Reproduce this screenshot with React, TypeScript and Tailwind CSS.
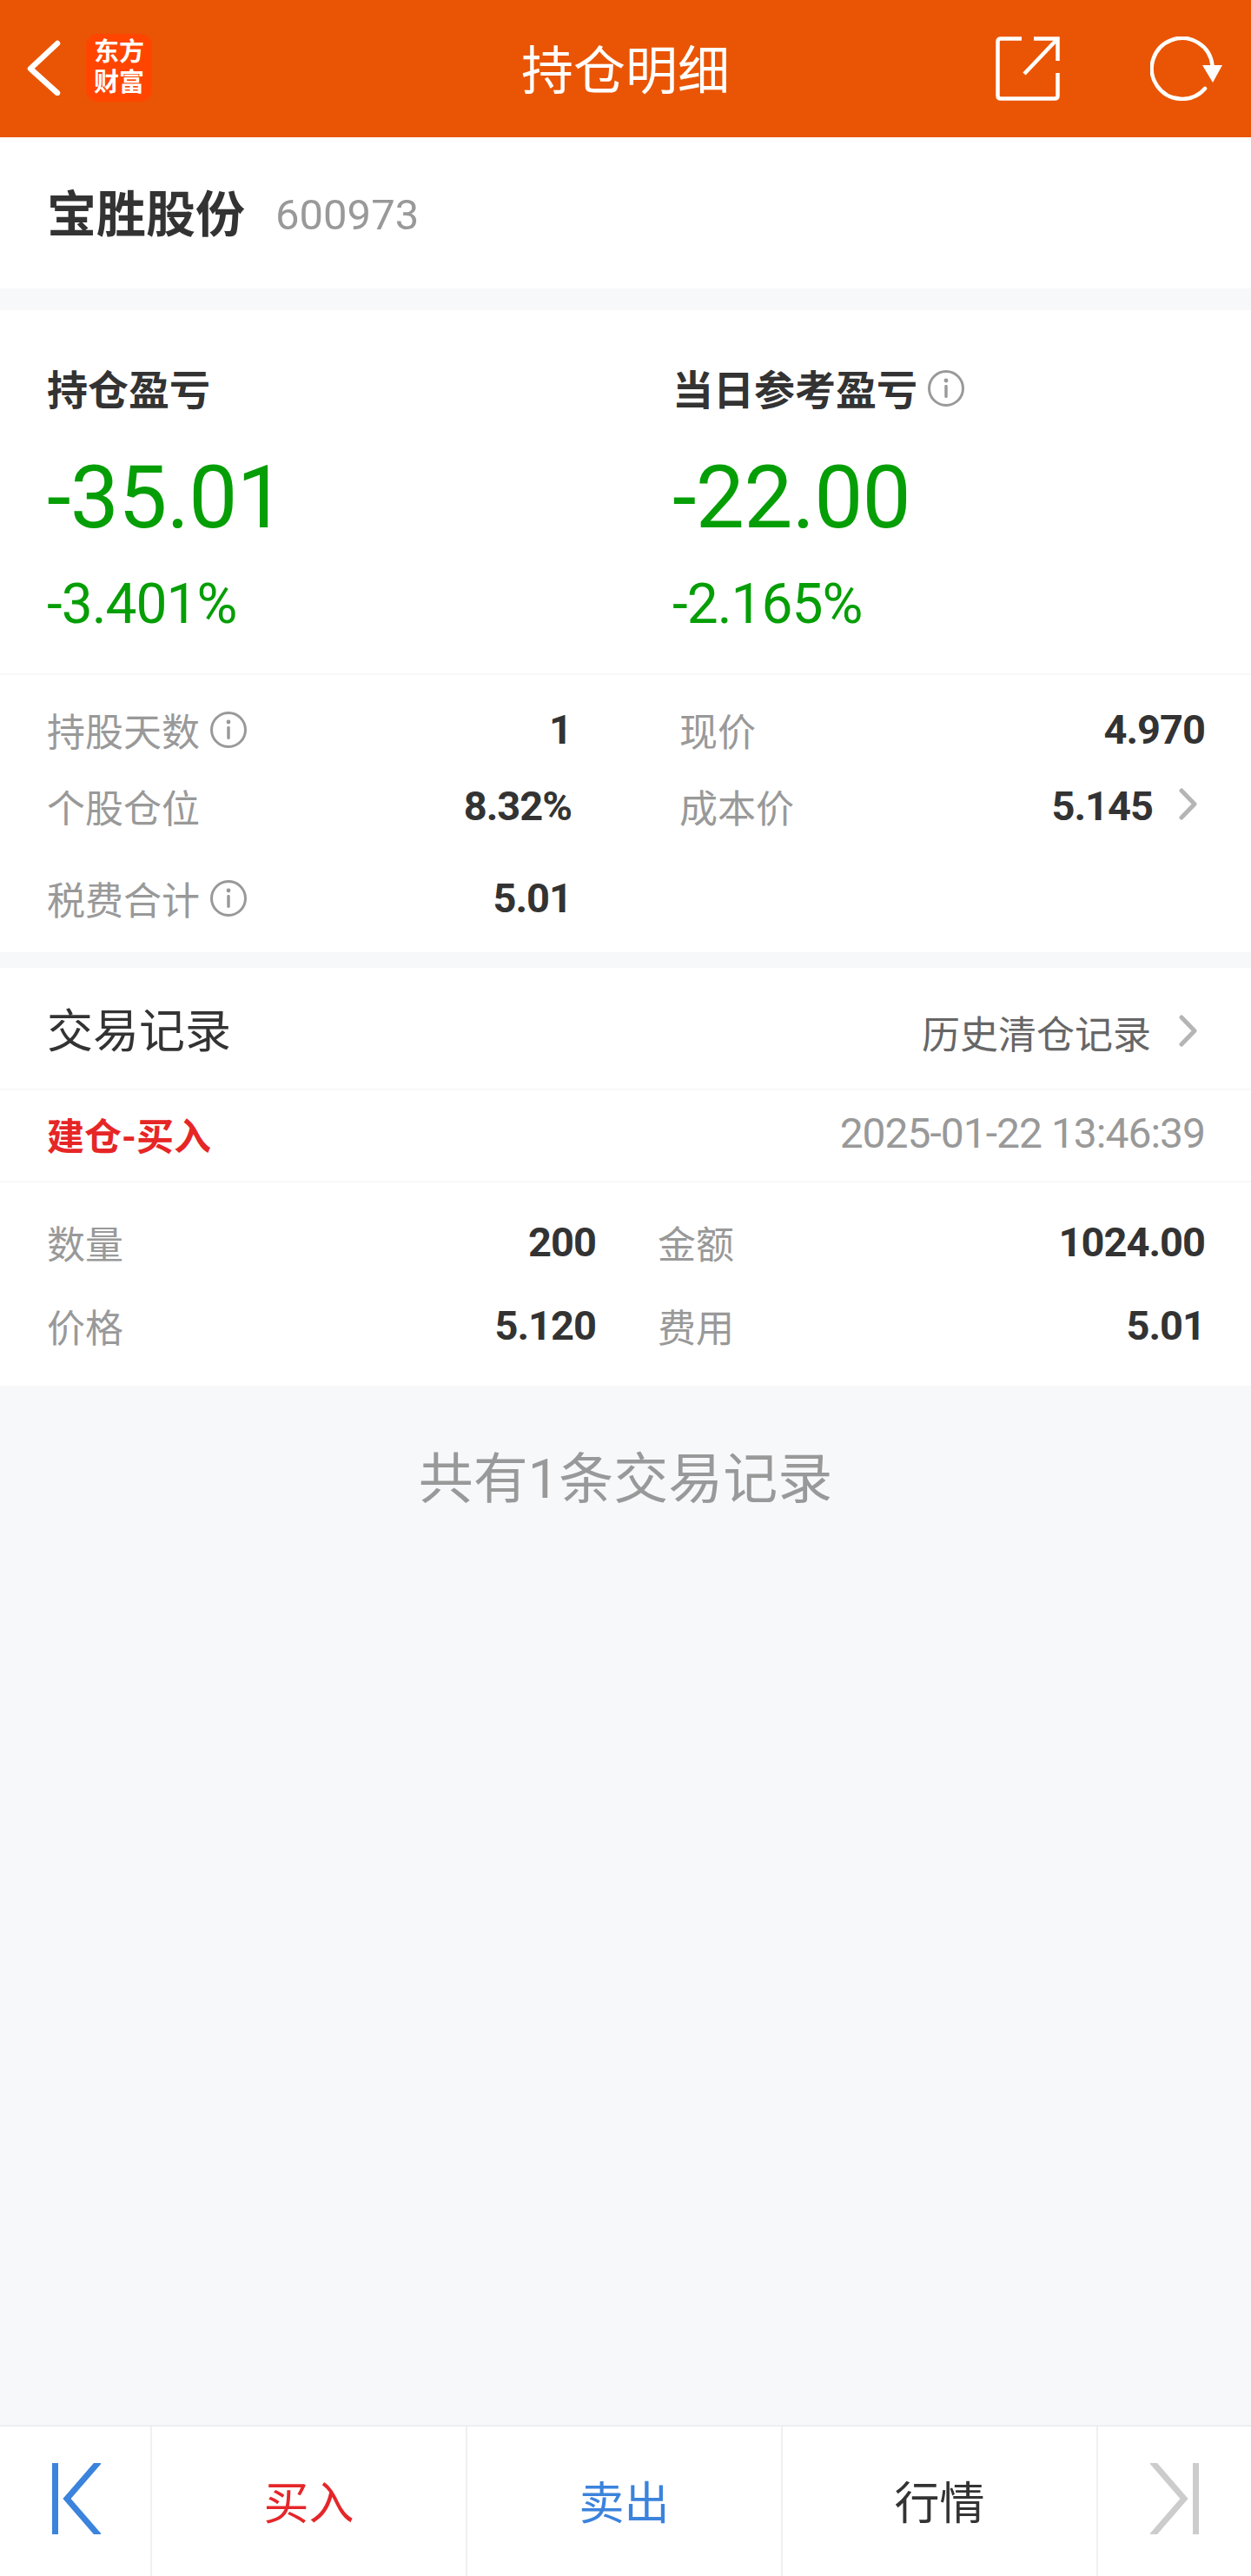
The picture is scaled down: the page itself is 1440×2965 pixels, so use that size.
const FONT = "font-['Roboto','Noto_Sans_CJK_SC',sans-serif]";

const Info = ({ className = "-mt-[8px]" }: { className?: string }) => (
  <svg viewBox="0 0 42 42" className={`ml-[12px] h-[42px] w-[42px] shrink-0 ${className}`} fill="none">
    <circle cx="21" cy="21" r="19.5" stroke="#999" strokeWidth="3" />
    <circle cx="21" cy="12" r="2.4" fill="#999" />
    <rect x="19.3" y="17" width="3.4" height="15" rx="1.4" fill="#999" />
  </svg>
);

const Chevron = ({ className = "" }: { className?: string }) => (
  <svg viewBox="0 0 21 37" className={`h-[37px] w-[21px] shrink-0 ${className}`} fill="none">
    <path d="M3 3 L18 18.5 L3 34" stroke="#b5b5b5" strokeWidth="5" strokeLinecap="round" strokeLinejoin="round" />
  </svg>
);

const Stat = ({ label, value, info, h, arrow }: { label: string; value: string; info?: boolean; h: string; arrow?: boolean }) => (
  <div className={`flex items-center justify-between ${h}`}>
    <span className="flex items-center pt-[10px] text-[44px] leading-none text-[#999]">
      {label}
      {info && <Info />}
    </span>
    <span className="flex items-center text-[47px] font-bold leading-none tracking-[-1px] text-[#333]">
      {value}
      {arrow && <Chevron className="-mt-[4px] ml-[30px] mr-[9px]" />}
    </span>
  </div>
);

const Action = ({ text, color }: { text: string; color: string }) => (
  <div className={`flex flex-1 items-center justify-center border-r-2 border-[#f0f0f2] pt-[8px] text-[52px] leading-none ${color}`}>{text}</div>
);

export default function App() {
  return (
    <div className={`flex h-[2965px] w-[1440px] flex-col bg-[#f7f8fa] ${FONT}`}>
      <header className="relative flex h-[158px] shrink-0 items-center justify-center bg-[#e95504] pt-[8px]">
        <svg viewBox="0 0 40 64" className="absolute left-[30px] top-[46px] h-[64px] w-[40px]" fill="none">
          <path d="M36 4 L5 33 L36 61" stroke="#fff" strokeWidth="6.5" strokeLinecap="round" strokeLinejoin="round" />
        </svg>
        <div className="absolute left-[99px] top-[39px] flex h-[78px] w-[76px] flex-col items-center justify-center rounded-[14px] bg-[#ff4500] text-[29px] font-bold leading-[35px] text-white">
          <span>东方</span>
          <span>财富</span>
        </div>
        <h1 className="text-[60px] font-normal leading-none text-white">持仓明细</h1>
        <svg viewBox="0 0 74 74" className="absolute left-[1146px] top-[42px] h-[74px] w-[74px]" fill="none" stroke="#fff" strokeWidth="4.5">
          <path d="M30 2.5 H6 Q2.5 2.5 2.5 6 V68 Q2.5 71.5 6 71.5 H68 Q71.5 71.5 71.5 68 V42" />
          <path d="M44 2.5 H71.5 V28" />
          <path d="M71.5 2.5 L33 43" />
        </svg>
        <svg viewBox="0 0 84 74" className="absolute left-[1324px] top-[42px] h-[74px] w-[84px]" fill="none">
          <path d="M71.5 33 A35 35 0 1 0 63 60" stroke="#fff" strokeWidth="4.5" strokeLinecap="round" />
          <path d="M60 33 H83 L72 53 Z" fill="#fff" />
        </svg>
      </header>

      <section className="flex h-[174px] shrink-0 items-center bg-white pl-[54px] pt-[5px]">
        <span className="text-[57px] font-bold leading-none text-[#333]">宝胜股份</span>
        <span className="ml-[35px] text-[49px] leading-none text-[#999]">600973</span>
      </section>

      <section className="mt-[25px] shrink-0 bg-white">
        <div className="flex h-[420px] border-b-2 border-[#f7f8fa] pl-[54px] pt-[69px]">
          <div className="w-[720px]">
            <div className="text-[47px] font-bold leading-none text-[#333]">持仓盈亏</div>
            <div className="mt-[50px] text-[100px] leading-none tracking-[-0.8px] text-[#069e06]">-35.01</div>
            <div className="mt-[41px] text-[64px] leading-none tracking-[-1px] text-[#069e06]">-3.401%</div>
          </div>
          <div>
            <div className="flex items-center text-[47px] font-bold leading-none text-[#333]">
              当日参考盈亏
              <Info className="-mt-[6px]" />
            </div>
            <div className="mt-[50px] text-[100px] leading-none tracking-[-0.8px] text-[#069e06]">-22.00</div>
            <div className="mt-[41px] text-[64px] leading-none tracking-[-1px] text-[#069e06]">-2.165%</div>
          </div>
        </div>
        <div className="flex h-[319px] gap-[124px] pl-[54px] pr-[53px] pt-[18px]">
          <div className="flex w-[604px] flex-col">
            <Stat label="持股天数" value="1" info h="h-[88px]" />
            <Stat label="个股仓位" value="8.32%" h="h-[88px]" />
            <Stat label="税费合计" value="5.01" info h="h-[124px]" />
          </div>
          <div className="flex flex-1 flex-col">
            <Stat label="现价" value="4.970" h="h-[88px]" />
            <Stat label="成本价" value="5.145" h="h-[88px]" arrow />
          </div>
        </div>
      </section>

      <section className="mt-[18px] shrink-0 bg-white">
        <div className="flex h-[141px] items-center justify-between border-b-2 border-[#f7f8fa] pl-[54px] pr-[62px] pt-[6px]">
          <span className="pt-[4px] text-[53px] leading-none text-[#333]">交易记录</span>
          <span className="flex items-center text-[44px] leading-none text-[#666]">
            <span className="pt-[10px]">历史清仓记录</span>
            <Chevron className="ml-[32px]" />
          </span>
        </div>
        <div className="flex h-[106px] items-center justify-between border-b-2 border-[#f7f8fa] pl-[54px] pr-[53px]">
          <span className="pt-[4px] text-[43px] font-bold leading-none text-[#e62626]">建仓-买入</span>
          <span className="pb-[5px] text-[48px] leading-none tracking-[-1px] text-[#999]">2025-01-22 13:46:39</span>
        </div>
        <div className="grid h-[234px] grid-cols-[632px_1fr] content-start gap-x-[71px] pl-[54px] pr-[53px] pt-[20px]">
          <Stat label="数量" value="200" h="h-[96px]" />
          <Stat label="金额" value="1024.00" h="h-[96px]" />
          <Stat label="价格" value="5.120" h="h-[96px]" />
          <Stat label="费用" value="5.01" h="h-[96px]" />
        </div>
      </section>

      <div className="mt-[72px] text-center text-[63px] leading-[72px] text-[#999]">共有1条交易记录</div>

      <footer className="mt-auto flex h-[174px] shrink-0 border-t-2 border-[#eceef1] bg-white">
        <div className="flex w-[175px] items-center justify-center border-r-2 border-[#f0f0f2] pb-[6px]">
          <svg viewBox="0 0 56 82" className="ml-[2px] h-[82px] w-[56px]" fill="none" stroke="#3b83dc" strokeWidth="7">
            <path d="M3.5 0 V82" strokeLinecap="round" />
            <path d="M56 -4 L17 41 L56 86" />
          </svg>
        </div>
        <Action text="买入" color="text-[#e5262a]" />
        <Action text="卖出" color="text-[#3b83dc]" />
        <Action text="行情" color="text-[#333]" />
        <div className="flex w-[176px] items-center justify-center pb-[6px]">
          <svg viewBox="0 0 56 82" className="h-[82px] w-[56px]" fill="none" stroke="#cccccc" strokeWidth="7">
            <path d="M52.5 0 V82" strokeLinecap="round" />
            <path d="M0 -4 L39 41 L0 86" />
          </svg>
        </div>
      </footer>
    </div>
  );
}
